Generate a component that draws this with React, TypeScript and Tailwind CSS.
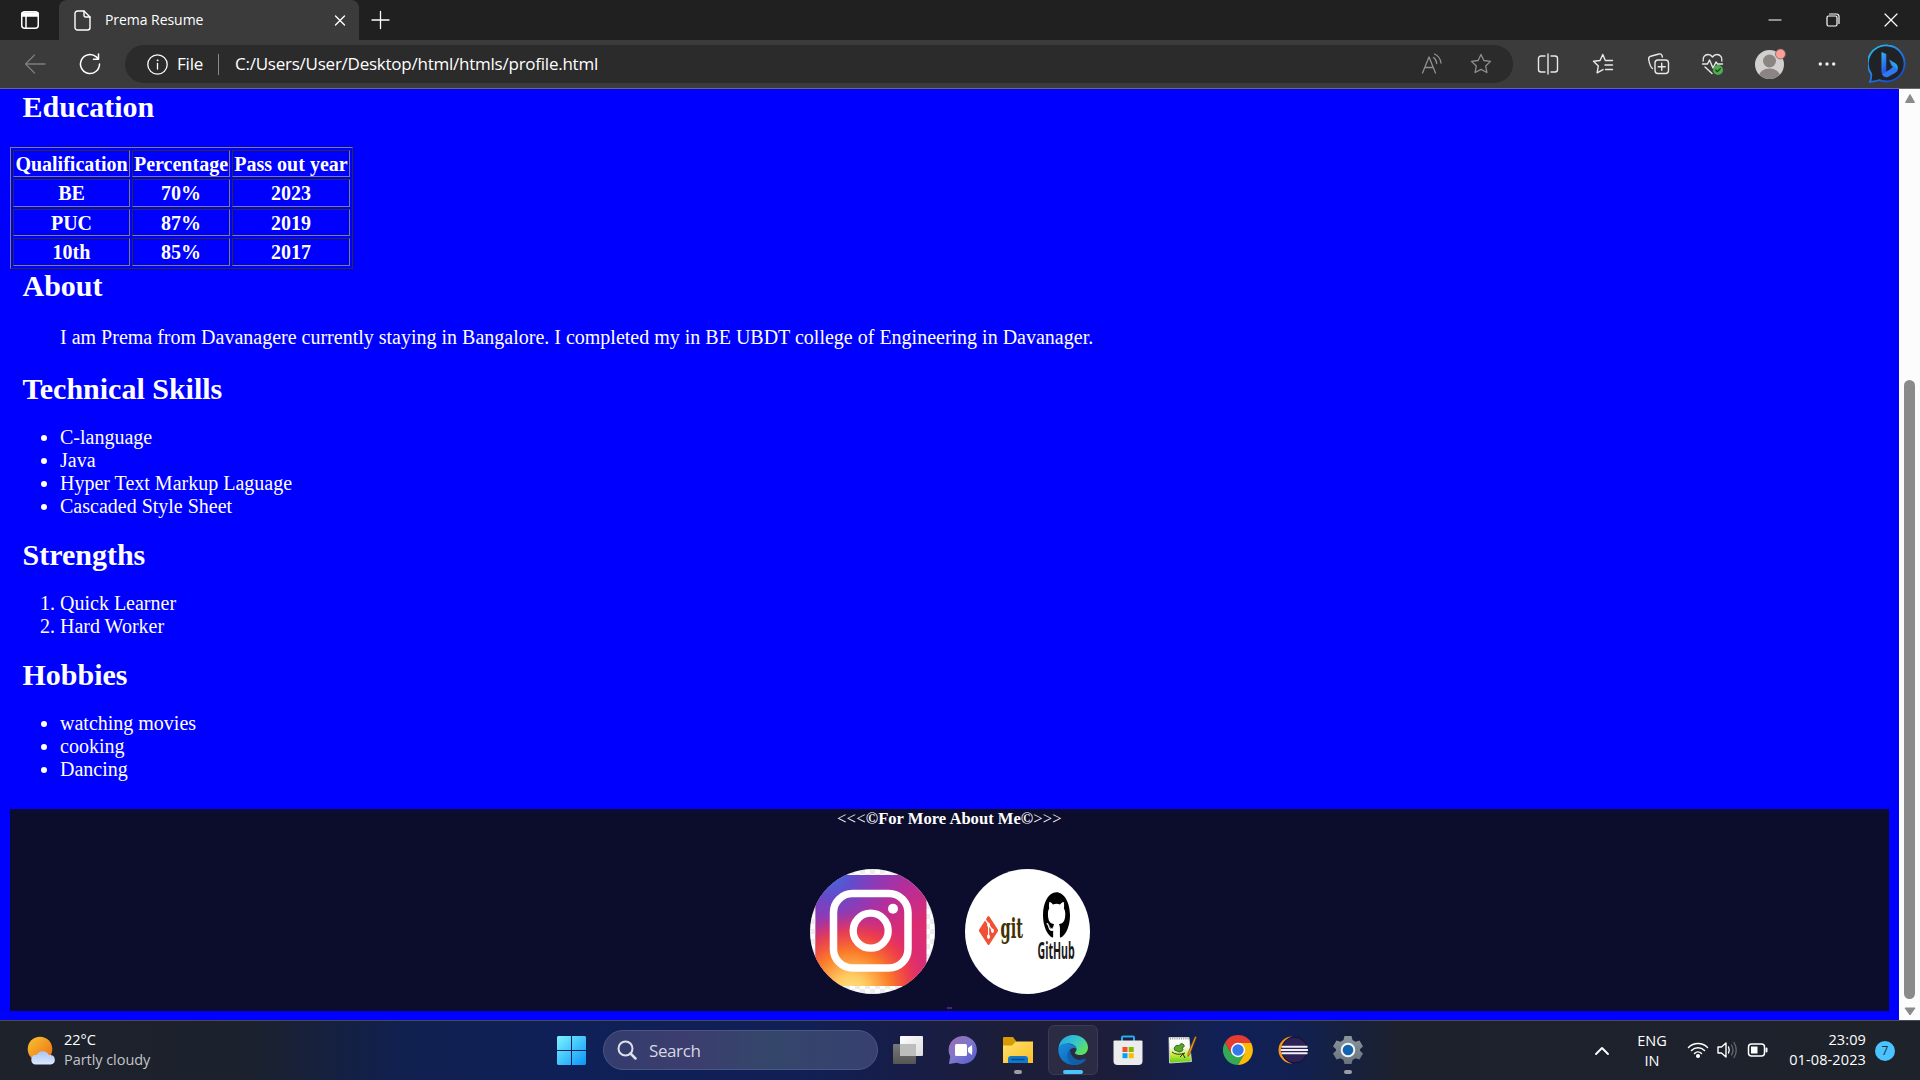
import React from "react";
import { FaGithub, FaGitAlt } from "react-icons/fa";

const line = { fill: "none", stroke: "currentColor", strokeLinecap: "round", strokeLinejoin: "round" } as const;

function TitleBar() {
  return (
    <div className="flex h-[40px] bg-[#202020]">
      <div className="flex w-[59px] items-center rounded-br-[8px] pl-[20px]">
        <svg width="20" height="20" viewBox="0 0 20 20" className="text-white" {...line} strokeWidth="1.5">
          <rect x="1.75" y="1.75" width="16.5" height="16.5" rx="3" />
          <path d="M2 3h16v3H2z" fill="currentColor" />
          <path d="M6 6v12" />
        </svg>
      </div>
      <div className="flex w-[300px] items-center rounded-t-[8px] bg-[#3b3b3b] pl-[15px]">
        <svg width="17" height="21" viewBox="0 0 17 21" className="text-white" {...line} strokeWidth="1.4">
          <path d="M3.5 1h6.500l6 6v10.500a2.500 2.500 0 0 1-2.500 2.500h-10a2.500 2.500 0 0 1-2.500-2.500v-14a2.500 2.500 0 0 1 2.500-2.500z" />
          <path d="M10 1v4.500a1.500 1.500 0 0 0 1.500 1.500h4.500" />
        </svg>
        <span className="ml-[14px] w-[225px] text-[14px] leading-5 tracking-[-0.05px] text-white">Prema Resume</span>
        <svg width="20" height="20" viewBox="0 0 20 20" className="text-white" {...line} strokeWidth="1.4">
          <path d="M5.500 6l9 9M14.500 6l-9 9" />
        </svg>
      </div>
      <svg width="20" height="40" viewBox="0 0 20 40" className="ml-[12px] text-white" {...line} strokeWidth="1.3">
        <path d="M9.500 11.500v17M1 20h17" />
      </svg>
      <div className="flex flex-1 items-center justify-end gap-[44px] pr-[22px] text-white">
        <svg width="14" height="14" {...line} strokeWidth="1.2"><path d="M1 7h12" /></svg>
        <svg width="14" height="14" {...line} strokeWidth="1.2">
          <rect x="1" y="3" width="10" height="10" rx="1.500" />
          <path d="M3.500 1h7a2.500 2.500 0 0 1 2.500 2.500v7" />
        </svg>
        <svg width="14" height="14" {...line} strokeWidth="1.2"><path d="M1 1l12 12M13 1L1 13" /></svg>
      </div>
    </div>
  );
}

const star = "M11 1.500l2.900 6 6.600.9-4.800 4.600 1.200 6.500L11 16.400l-5.900 3.100 1.200-6.500L1.500 8.400l6.600-.9z";

function Toolbar() {
  return (
    <div className="flex h-[49px] items-center border-b border-[#6b6b6b] bg-[#3b3b3b] text-[#e8e8e8]">
      <svg width="22" height="22" viewBox="0 0 22 22" className="ml-[24px] text-[#7d7d7d]" {...line} strokeWidth="1.3">
        <path d="M21 11H1.500M10.500 2l-9 9 9 9" />
      </svg>
      <svg width="24" height="24" viewBox="0 0 24 24" className="ml-[32px] text-white" {...line} strokeWidth="1.5">
        <path d="M21.500 12a9.500 9.500 0 1 1-3.200-7.100L20.500 7M20.500 2v5.200h-5" />
      </svg>
      <div className="ml-[23px] flex h-[38px] w-[1388px] items-center rounded-full bg-[#2b2b2b] pl-[21px] text-white">
        <svg width="23" height="23" viewBox="0 0 23 23" {...line} strokeWidth="1.3">
          <circle cx="11.500" cy="11.500" r="9.700" />
          <path d="M11.500 10.500v5.500" />
          <circle cx="11.500" cy="7.300" r=".6" fill="currentColor" strokeWidth=".6" />
        </svg>
        <span className="ml-[8px] w-[41px] text-[17px] leading-6 tracking-[-0.2px]">File</span>
        <span className="h-[21px] w-px bg-[#8a8a8a]" />
        <span className="ml-[16px] flex-1 text-[17px] leading-6 tracking-[-0.24px]">C:/Users/User/Desktop/html/htmls/profile.html</span>
        <svg width="22" height="22" viewBox="0 0 22 22" className="text-[#909090]" {...line} strokeWidth="1.3">
          <path d="M1.500 20L8 4l6.500 16M4 14.500h8M12.500 4.500q3 2 3.200 6M13.500 1q6 3 6.500 9" />
        </svg>
        <svg width="22" height="22" viewBox="0 0 22 22" className="mr-[21px] ml-[27px] text-[#909090]" {...line} strokeWidth="1.3">
          <path d={star} />
        </svg>
      </div>
      <svg width="22" height="22" viewBox="0 0 22 22" className="ml-[24px]" {...line} strokeWidth="1.4">
        <path d="M8 3H4a2.500 2.500 0 0 0-2.500 2.500v11A2.500 2.500 0 0 0 4 19h4M14 3h4a2.500 2.500 0 0 1 2.500 2.500v11A2.500 2.500 0 0 1 18 19h-4M11 1v20" />
      </svg>
      <svg width="22" height="22" viewBox="0 0 22 22" className="ml-[33px]" {...line} strokeWidth="1.4">
        <path d="M13.500 7.500h-.2L10.800 1.500 8 7.500l-6.500.8 4.800 4.800-1.200 6.700L11 16.600M14.500 7.500h6M13 12h7.500M13.500 16.500h7" />
      </svg>
      <svg width="24" height="24" viewBox="0 0 24 24" className="ml-[33px]" {...line} strokeWidth="1.4">
        <path d="M5.500 16.500C3.500 15 2.500 12 1.700 7.500c-.3-1.500.5-2.800 2-3.300L12 2c1.500-.3 2.600.2 3 1.500l.4 1.500" />
        <rect x="8" y="8" width="13.500" height="13.500" rx="3" />
        <path d="M14.750 11.200v7M11.200 14.750h7" />
      </svg>
      <svg width="24" height="24" viewBox="0 0 24 24" className="ml-[30px]" {...line} strokeWidth="1.4">
        <path d="M2.200 9C1.500 5.500 3.800 2.500 7 2.500c2 0 3.500 1 4.500 2.500C12.500 3.500 14 2.500 16 2.500c3.200 0 5.500 3 4.800 6.500M1.500 12h5l2-4 3.500 8 3-6 1.500 2h5M4 15l7 6.500" />
        <circle cx="17" cy="18" r="5" fill="#4cae50" stroke="none" />
        <path d="M14.800 18l1.600 1.600 3-3" stroke="#173b1b" strokeWidth="1.200" />
      </svg>
      <svg width="33" height="33" viewBox="0 0 33 33" className="ml-[29px]">
        <defs><clipPath id="face"><circle cx="15.500" cy="16.500" r="14.500" /></clipPath></defs>
        <circle cx="15.500" cy="16.500" r="14.500" fill="#d2d0ce" />
        <g clipPath="url(#face)" fill="#8a8583">
          <circle cx="15.500" cy="13" r="6.500" />
          <ellipse cx="15.500" cy="28" rx="10.500" ry="7.500" />
        </g>
        <circle cx="26.500" cy="6" r="5" fill="#ff9d98" stroke="#6a5b5a" strokeWidth=".7" />
      </svg>
      <svg width="18" height="6" viewBox="0 0 18 6" className="ml-[31px]" fill="#eee">
        <circle cx="2.300" cy="3" r="1.700" /><circle cx="9" cy="3" r="1.700" /><circle cx="15.700" cy="3" r="1.700" />
      </svg>
      <svg width="40" height="40" viewBox="0 0 40 40" className="ml-[32px]">
        <defs>
          <linearGradient id="bingRing" x1="0" y1="0" x2=".8" y2="1"><stop stopColor="#22c7e8" /><stop offset=".55" stopColor="#1f7bea" /><stop offset="1" stopColor="#1747c8" /></linearGradient>
          <linearGradient id="bingB" x1="0" y1="0" x2=".3" y2="1"><stop stopColor="#35b5f5" /><stop offset="1" stopColor="#2450ea" /></linearGradient>
          <linearGradient id="bingT" x1="1" y1="0" x2="0" y2="1"><stop stopColor="#28d5e8" /><stop offset="1" stopColor="#2a62f0" /></linearGradient>
        </defs>
        <path d="M20 1.500a18 18 0 1 1-8.500 34.500c-3 1-6 1.700-9.500 1.900 1.200-3 1.500-5 1.200-8A18 18 0 0 1 20 1.500z" fill="#202226" stroke="url(#bingRing)" strokeWidth="1.800" />
        <path d="M13.500 8l4.800 2v17.500l-1.800 4q-3-1.200-3-4z" fill="url(#bingB)" />
        <path d="M14 30q2 4 6 3l7-4q3.500-2 2.500-5-1-2-4-2-3 4-7 5.500-2.500 1.500-4.500 2.500z" fill="#2f78f4" />
        <path d="M21 15.500l6 3.500q3.500 2 2.700 6.500l-2-1.700-4-1.800z" fill="url(#bingT)" />
      </svg>
    </div>
  );
}

const rows = [
  ["Qualification", "Percentage", "Pass out year"],
  ["BE", "70%", "2023"],
  ["PUC", "87%", "2019"],
  ["10th", "85%", "2017"],
];

function EducationTable() {
  return (
    <div className="mt-[12px] ml-[10px] grid h-[122px] w-[343px] grid-cols-[117px_98px_118px] grid-rows-[27px_28px_27px_28px] gap-x-[2px] gap-y-[2px] border border-t-[#808080] border-r-[#2c2c3c] border-b-[#2c2c3c] border-l-[#808080] p-[2px] font-bold">
      {rows.flat().map((cell) => (
        <div key={cell} className="flex items-center justify-center border border-t-[#2c2c3c] border-r-[#808080] border-b-[#808080] border-l-[#2c2c3c] pt-px text-[20px] leading-[23px] whitespace-nowrap">
          {cell}
        </div>
      ))}
    </div>
  );
}

function Heading({ children }: { children: string }) {
  return <h2 className="pl-[22.5px] text-[30px] leading-[34px] font-bold">{children}</h2>;
}

function Instagram() {
  return (
    <svg width="125" height="125" viewBox="0 0 125 125">
      <defs>
        <clipPath id="igClip"><circle cx="62.500" cy="62.500" r="62.500" /></clipPath>
        <pattern id="checks" width="10" height="10" patternUnits="userSpaceOnUse">
          <rect width="10" height="10" fill="#fff" />
          <path d="M0 0h5v5H0zM5 5h5v5H5z" fill="#ececec" />
        </pattern>
        <linearGradient id="igBase" x1=".2" y1="0" x2=".75" y2="1">
          <stop stopColor="#7a3bc4" /><stop offset=".35" stopColor="#b72d98" /><stop offset=".65" stopColor="#dc2b70" /><stop offset="1" stopColor="#d82c78" />
        </linearGradient>
        <radialGradient id="igBlue" cx=".15" cy="0" r=".65"><stop stopColor="#3f6fe0" /><stop offset=".3" stopColor="#5a50cf" stopOpacity=".8" /><stop offset="1" stopColor="#a035b8" stopOpacity="0" /></radialGradient>
        <radialGradient id="igWarm" cx=".32" cy="1.050" r=".72"><stop stopColor="#ffe185" /><stop offset=".2" stopColor="#ffcb62" /><stop offset=".5" stopColor="#fb7c28" /><stop offset=".75" stopColor="#f4433f" stopOpacity=".75" /><stop offset="1" stopColor="#dd2b6d" stopOpacity="0" /></radialGradient>
      </defs>
      <g clipPath="url(#igClip)">
        <rect width="125" height="125" fill="url(#checks)" />
        <rect x="5.500" y="6" width="111" height="111" fill="url(#igBase)" />
        <rect x="5.500" y="6" width="111" height="111" fill="url(#igBlue)" />
        <rect x="5.500" y="6" width="111" height="111" fill="url(#igWarm)" />
      </g>
      <rect x="23.500" y="24.500" width="74.500" height="74.500" rx="19" fill="none" stroke="#fff" strokeWidth="7.500" />
      <circle cx="60.700" cy="61.700" r="17.500" fill="none" stroke="#fff" strokeWidth="7.300" />
      <circle cx="83" cy="39.700" r="5" fill="#fff" />
    </svg>
  );
}

function GitBadge() {
  return (
    <svg width="125" height="125" viewBox="0 0 125 125">
      <circle cx="62.500" cy="62.500" r="62.500" fill="#fff" />
      <g transform="translate(14 45) scale(.19 .33)">
        <FaGitAlt size={100} preserveAspectRatio="none" color="#f05033" />
      </g>
      <text transform="translate(35.500 69) scale(.52 1)" fontFamily="'DejaVu Serif', serif" fontWeight="700" fontSize="28" fill="#413000">git</text>
      <g transform="translate(78 22.500) scale(.27 .48)">
        <FaGithub size={100} preserveAspectRatio="none" color="#000" />
      </g>
      <text transform="translate(72.500 90) scale(.45 1)" fontFamily="'Open Sans', sans-serif" fontWeight="700" fontSize="23.500" fill="#1a1718">GitHub</text>
    </svg>
  );
}

function ResumePage() {
  return (
    <main className="flex-1 bg-[#0000ff] font-['Liberation_Serif',serif] text-[20px] leading-[23px] text-white">
      <div className="pt-[1px]"><Heading>Education</Heading></div>
      <div className="pt-[11px]"><EducationTable /></div>
      <Heading>About</Heading>
      <p className="mt-[23px] pl-[60px]">I am Prema from Davanagere currently staying in Bangalore. I completed my in BE UBDT college of Engineering in Davanager.</p>
      <div className="pt-[23px]"><Heading>Technical Skills</Heading></div>
      <ul className="mt-[20px] list-disc pl-[60px]">
        <li>C-language</li>
        <li>Java</li>
        <li>Hyper Text Markup Laguage</li>
        <li>Cascaded Style Sheet</li>
      </ul>
      <div className="pt-[20px]"><Heading>Strengths</Heading></div>
      <ol className="mt-[20px] list-decimal pl-[60px]">
        <li>Quick Learner</li>
        <li>Hard Worker</li>
      </ol>
      <div className="pt-[20px]"><Heading>Hobbies</Heading></div>
      <ul className="mt-[20px] list-disc pl-[60px]">
        <li>watching movies</li>
        <li>cooking</li>
        <li>Dancing</li>
      </ul>
      <footer className="mx-[10px] mt-[28px] flex h-[202px] flex-col items-center bg-[#0c0c2d]">
        <h5 className="text-[16.600px] leading-[19px] font-bold"><span className="font-normal tracking-[0.2px]">&lt;&lt;&lt;</span>©For More About Me©<span className="font-normal tracking-[0.2px]">&gt;&gt;&gt;</span></h5>
        <div className="mt-[41px] flex gap-[30px]">
          <Instagram />
          <GitBadge />
        </div>
        <span className="mt-[13px] h-[2px] w-[5px] bg-[#551a8b]" />
      </footer>
    </main>
  );
}

function Scrollbar() {
  return (
    <div className="flex w-[21px] flex-col items-center bg-[#fcfcfc]">
      <svg width="12" height="14" viewBox="0 0 12 14" className="mt-px"><path d="M6 4.500L1.500 12.500h9z" fill="#8a8a8a" stroke="#8a8a8a" strokeLinejoin="round" /></svg>
      <div className="mt-[276px] h-[619px] w-[11px] rounded-full bg-[#8a8a8a]" />
      <svg width="12" height="10" viewBox="0 0 12 10" className="mt-[8px]"><path d="M1 1h10L6 8z" fill="#8a8a8a" stroke="#8a8a8a" strokeLinejoin="round" /></svg>
    </div>
  );
}

function TaskIcon({ children, mark }: { children: React.ReactNode; mark?: "open" | "active" }) {
  return (
    <div className="flex w-[55px] justify-center">
      <div className={mark === "active" ? "mt-[4px] flex h-[50px] w-[50px] flex-col items-center rounded-[6px] border border-[#3a3b52] bg-[#2b2c44] pt-[9px]" : "mt-[4px] flex h-[50px] w-[50px] flex-col items-center pt-[10px]"}>
        <svg width="30" height="30" viewBox="0 0 30 30" className="shrink-0">{children}</svg>
        {mark === "open" && <span className="mt-[5px] h-[4px] w-[8px] shrink-0 rounded-full bg-[#9b9ca8]" />}
        {mark === "active" && <span className="mt-[5px] h-[4px] w-[20px] shrink-0 rounded-full bg-[#4cc2ff]" />}
      </div>
    </div>
  );
}

function Taskbar() {
  return (
    <div className="flex h-[60px] border-t border-[#4a4a50] bg-[linear-gradient(90deg,#1e222b_0px,#1b212d_250px,#10204f_400px,#0f2058_560px,#102055_800px,#171d48_900px,#1c1d39_1000px,#1b1d3b_1120px,#102158_1230px,#11204f_1300px,#1c212c_1400px,#1e222b_1920px)] text-white">
      <div className="flex w-[557px] items-center pl-[26px]">
        <svg width="30" height="30" viewBox="0 0 30 30">
          <defs>
            <linearGradient id="sun" x1="0" y1="0" x2="1" y2="1"><stop stopColor="#f7c531" /><stop offset="1" stopColor="#ef6a12" /></linearGradient>
            <linearGradient id="cloud" x1="0" y1="0" x2="0" y2="1"><stop stopColor="#a8c4f4" /><stop offset="1" stopColor="#dce9ff" /></linearGradient>
          </defs>
          <circle cx="14" cy="13" r="12.300" fill="url(#sun)" />
          <path d="M9 28.500a5 5 0 0 1-.5-9.500h2a7 7 0 0 1 12.500 0h1a4.800 4.800 0 0 1 1 9.500z" fill="url(#cloud)" />
        </svg>
        <div className="mb-[2px] ml-[8px] flex flex-col text-[14.500px] leading-[20px] tracking-[-0.05px]">
          <span>22°C</span>
          <span className="text-[#c3c5c9]">Partly cloudy</span>
        </div>
      </div>
      <svg width="29" height="29" viewBox="0 0 29 29" className="mt-[15px]">
        <defs><linearGradient id="win" x1="0" y1="0" x2="1" y2="1"><stop stopColor="#7cf3ff" /><stop offset="1" stopColor="#0a94f8" /></linearGradient></defs>
        <path d="M1 0h13v14H0V1zM15 0h13l1 1v13H15zM0 15h14v14H1l-1-1zM15 15h14v13l-1 1H15z" fill="url(#win)" />
      </svg>
      <div className="mt-[9px] ml-[17px] flex h-[40px] w-[275px] items-center rounded-full border border-[#4c5685] bg-[linear-gradient(90deg,#333d6e,#3c3d6e_30%,#34466a_60%,#374070)] pl-[13px]">
        <svg width="20" height="20" viewBox="0 0 20 20" className="text-[#dfe1ea]" {...line} strokeWidth="2"><circle cx="8.500" cy="8.500" r="7" /><path d="M13.500 13.500l5 5" strokeWidth="2.500" /></svg>
        <span className="mt-px ml-[12px] text-[17px] leading-6 tracking-[-0.4px] text-[#d5d7e2]">Search</span>
      </div>
      <div className="ml-[2.500px] flex w-[495px]">
        <TaskIcon>
          <defs>
            <linearGradient id="tvw" x1="0" y1="0" x2="1" y2="1"><stop stopColor="#fff" /><stop offset="1" stopColor="#dcdcdc" /></linearGradient>
            <linearGradient id="tvg" x1="0" y1="0" x2="0" y2="1"><stop stopColor="#787878" /><stop offset="1" stopColor="#555" /></linearGradient>
          </defs>
          <rect y="9" width="23" height="20" rx="1" fill="url(#tvg)" />
          <rect x="7" y="1" width="23" height="20" rx="1" fill="url(#tvw)" />
          <rect x="7" y="9" width="16" height="12" fill="#bdbdbd" />
        </TaskIcon>
        <TaskIcon>
          <defs><linearGradient id="chat" x1="0" y1="0" x2="1" y2="1"><stop stopColor="#a06cae" /><stop offset=".5" stopColor="#7d78cc" /><stop offset="1" stopColor="#5058d0" /></linearGradient></defs>
          <path d="M15 1a14 14 0 1 1-6 26.700L1 29l1.200-7.500A14 14 0 0 1 15 1z" fill="url(#chat)" />
          <rect x="7" y="9" width="12" height="12" rx="1.500" fill="#fff" />
          <path d="M20 13l4-3q.5 5 0 10l-4-3z" fill="#fff" />
        </TaskIcon>
        <TaskIcon mark="open">
          <defs><linearGradient id="folder" x1="0" y1="0" x2="1" y2="1"><stop stopColor="#ffe06c" /><stop offset="1" stopColor="#fbbf25" /></linearGradient></defs>
          <path d="M0 3q0-1 1-1h9l3 4v8H0z" fill="#d79b08" />
          <path d="M0 10.500h9l4-4h17V28H0z" fill="url(#folder)" />
          <path d="M5 28v-4q0-3 3-3h14q3 0 3 3v4z" fill="#1279ca" />
          <path d="M9 24.500h12" stroke="#064a87" strokeWidth="1.500" strokeLinecap="round" />
        </TaskIcon>
        <TaskIcon mark="active">
          <defs>
            <linearGradient id="edgeTop" x1="0" y1=".2" x2="1" y2=".8"><stop stopColor="#25a8e8" /><stop offset=".5" stopColor="#36c7c8" /><stop offset="1" stopColor="#66e64a" /></linearGradient>
            <linearGradient id="edgeLow" x1="0" y1="0" x2="1" y2="1"><stop stopColor="#188fe0" /><stop offset="1" stopColor="#0b59a8" /></linearGradient>
          </defs>
          <path d="M.5 13C1.500 5 8 0 15 0c9 0 15 6 15 12.500 0 5-4 7.500-7.500 7.500-4 0-6-1.500-5.500-2.500 1-1 1.500-2 1.500-3.500 0-3-4-5.500-8-5.500-5 0-9 3-10 4.500z" fill="url(#edgeTop)" />
          <path d="M.3 14C1 9 6 8 10 8.500c4 .5 8.500 2.500 8.500 6-1.500-2-5-2-7 1-2.500 4-.5 10 5 11.500 5 1.500 9-.5 12-3-2.500 4-7.500 6.500-13.500 6C6.500 30 0 23 .3 14z" fill="url(#edgeLow)" />
          <path d="M12 15c-3 2-3.500 6-1.500 10 2 3.500 5 5 7 5 5-.5 8-3 10.500-6.500-5 2-9 2-12-.5-3-2.500-3.500-5-4-8z" fill="#1060a8" />
        </TaskIcon>
        <TaskIcon>
          <path d="M9 7V2.500q0-1 1-1h10q1 0 1 1V7" fill="none" stroke="#29a9ea" strokeWidth="2" />
          <path d="M.5 6.500q0-1 1-1h27q1 0 1 1V26q0 4-4 4h-21q-4 0-4-4z" fill="#ececec" />
          <path d="M9.500 12h5v5h-5z" fill="#f25022" /><path d="M15.700 12h5v5h-5z" fill="#7fba00" /><path d="M9.500 18.200h5v5h-5z" fill="#00a4ef" /><path d="M15.700 18.200h5v5h-5z" fill="#ffb900" />
        </TaskIcon>
        <TaskIcon>
          <defs><linearGradient id="npp" x1="0" y1="0" x2="0" y2="1"><stop stopColor="#fff" /><stop offset=".4" stopColor="#f6faea" /><stop offset=".7" stopColor="#c5e63a" /><stop offset="1" stopColor="#55cf18" /></linearGradient></defs>
          <path d="M1 2.500h20l2.500 24L1.500 28z" fill="url(#npp)" stroke="#e2e2e2" strokeWidth=".8" />
          <path d="M2 3.500h19" stroke="#999" strokeWidth="2" strokeDasharray="1 1.200" />
          <path d="M6 13q2-4 5-2.500 2-3 4-1.500 3 2.500-1 4 2 1.500 0 3-3 2-5 0-3 0-3-3z" fill="#55a82a" stroke="#2f5225" strokeWidth=".8" />
          <path d="M4 17q5 4 13 1M12 22l3-3 2 4" fill="none" stroke="#203516" strokeWidth="1" />
          <path d="M28.500 2L22 19l-2 2.500V18l7-16.500z" fill="#efa21b" stroke="#67420c" strokeWidth=".6" />
        </TaskIcon>
        <TaskIcon>
          <path d="M15 15l6.500 3.700L15 30A15 15 0 0 1 2 7.500L8.500 18.700z" fill="#34a853" />
          <path d="M15 8h13.200A15 15 0 0 1 15 30l6.500-11.300z" fill="#fbbc05" />
          <path d="M2 7.500L8.500 18.700 15 8h13.200A15 15 0 0 0 2 7.500z" fill="#e53b30" />
          <circle cx="15" cy="15" r="7.200" fill="#fff" /><circle cx="15" cy="15" r="5.700" fill="#3478ee" />
        </TaskIcon>
        <TaskIcon>
          <path d="M14 1.500a13.500 13.500 0 0 0 0 27A19 19 0 0 1 3.500 15 19 19 0 0 1 14 1.500z" fill="#f7941e" />
          <circle cx="16.500" cy="15" r="13" fill="#2c2255" stroke="#130f2b" />
          <path d="M3.500 11.700h26M3 15h27M3.500 18.300h26" stroke="#f0eef7" strokeWidth="2" />
        </TaskIcon>
        <TaskIcon mark="open">
          <defs><linearGradient id="gear" x1="0" y1="0" x2="0" y2="1"><stop stopColor="#8a959e" /><stop offset="1" stopColor="#68737c" /></linearGradient></defs>
          <path d="M11.500 1h7l1 4 3 1.700 4-1.200L30 11.500l-3 2.800v1.400l3 2.800-3.500 6-4-1.200-3 1.700-1 4h-7l-1-4-3-1.700-4 1.200L0 18.500l3-2.800v-1.400l-3-2.800 3.500-6 4 1.200 3-1.700z" fill="url(#gear)" />
          <circle cx="15" cy="15" r="6.300" fill="#1463ae" stroke="#f1f4f6" strokeWidth="2" />
        </TaskIcon>
      </div>
      <div className="flex flex-1 items-center justify-end pr-[25px]">
        <svg width="16" height="10" viewBox="0 0 16 10" {...line} strokeWidth="1.900"><path d="M2 8l6-6 6 6" /></svg>
        <div className="ml-[24px] flex w-[36px] flex-col items-center text-[14.500px] leading-[20px]"><span>ENG</span><span>IN</span></div>
        <svg width="22" height="18" viewBox="0 0 22 18" className="mb-[2px] ml-[17px]" {...line} strokeWidth="1.500">
          <path d="M1.500 6.500a13.500 13.500 0 0 1 19 0M4.500 9.500a9.300 9.300 0 0 1 13 0M7.500 12.500a5 5 0 0 1 7 0" />
          <circle cx="11" cy="15" r="1.300" fill="currentColor" />
        </svg>
        <svg width="22" height="18" viewBox="0 0 22 18" className="mb-px ml-[7px]" {...line} strokeWidth="1.400">
          <path d="M2 6h3.500L10 2v14l-4.500-4H2zM12.500 6q1.500 3 0 6" />
          <path d="M15.500 4q3 5 0 10M18 1.500q4.500 7.500 0 15" stroke="#60646d" />
        </svg>
        <svg width="22" height="16" viewBox="0 0 22 16" className="mb-px ml-[9px]" {...line} strokeWidth="1.500">
          <rect x="1.500" y="2" width="16" height="12" rx="3" /><rect x="4" y="4.500" width="6.500" height="7" fill="currentColor" stroke="none" /><path d="M19.500 6.500v3" strokeWidth="2" />
        </svg>
        <div className="mb-[2px] ml-[10px] flex w-[87px] flex-col items-end text-[14.500px] leading-[20px] tracking-[0.12px]"><span>23:09</span><span>01-08-2023</span></div>
        <div className="ml-[9px] flex h-[20px] w-[20px] items-center justify-center rounded-full bg-[#4cc2ff] text-[12px] text-[#12303f]">7</div>
      </div>
    </div>
  );
}

export default function App() {
  return (
    <div className="flex h-[1080px] w-[1920px] flex-col overflow-hidden font-['Open_Sans','Noto_Sans',sans-serif]">
      <TitleBar />
      <Toolbar />
      <div className="flex h-[931px]">
        <ResumePage />
        <Scrollbar />
      </div>
      <Taskbar />
    </div>
  );
}
